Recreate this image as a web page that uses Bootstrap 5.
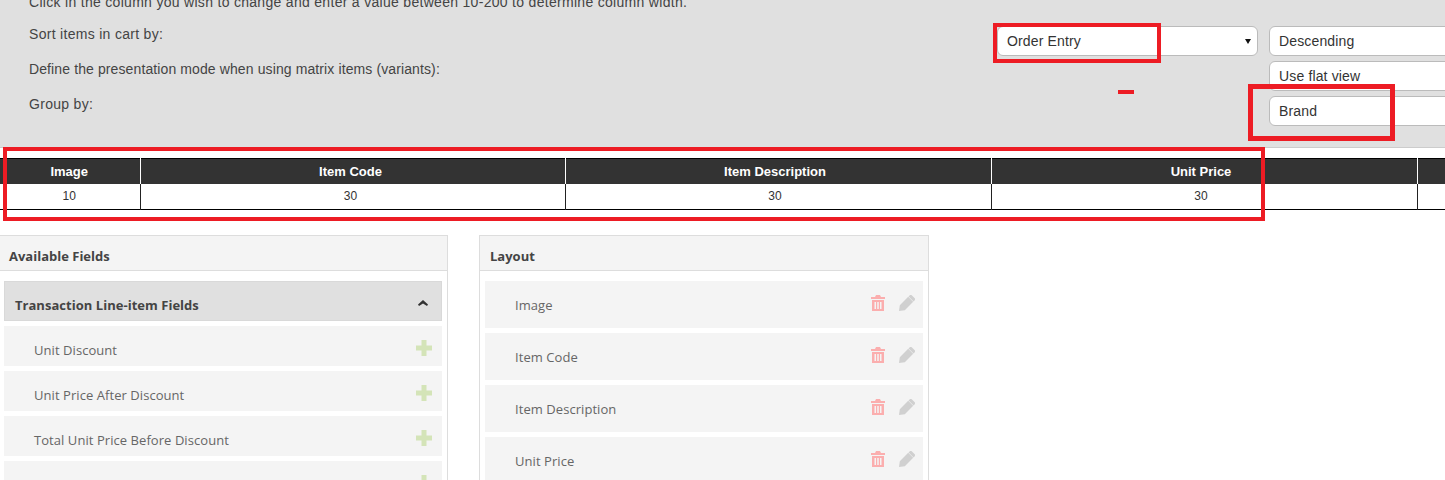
<!DOCTYPE html>
<html lang="en">
<head>
<meta charset="utf-8">
<title>Cart layout</title>
<link href="https://cdn.jsdelivr.net/npm/bootstrap@5.3.0/dist/css/bootstrap.min.css" rel="stylesheet">
<style>
html,body{height:480px;overflow:hidden;background:#fff}
body{position:relative;width:1445px;font-family:"Liberation Sans",Arial,sans-serif;color:#444}
.cfg{margin-top:-8px;height:156px;background:#e0e0e0;border-bottom:1px solid #ccc;padding-left:29px;font-size:14px;line-height:20px;color:#444;overflow:hidden;letter-spacing:.3px}
.cfg-intro{height:21px;margin-bottom:13px}
.cfg-row{height:30px;margin-bottom:5px}
.cfg-label{width:968px;flex:none;margin-top:-2px}
.cfg-label-tight{letter-spacing:.11px}
.pick{flex:none;width:261px;height:30px;padding:0 20px 0 9px;font-size:14px;line-height:28px;letter-spacing:.15px;color:#333;border:1px solid #bbb;border-radius:6px;box-shadow:none;background-color:#fff;background-position:right 6px center;background-size:6px 5px;background-image:url("data:image/svg+xml,%3Csvg xmlns='http://www.w3.org/2000/svg' viewBox='0 0 6 5'%3E%3Cpath d='M0 0h6L3 5z' fill='%23111'/%3E%3C/svg%3E")}
.pick-second{margin-left:11px}
.pick-offset{margin-left:272px}
.cols{table-layout:fixed;width:1700px;margin:10px 0 0 -1px;border-collapse:collapse;border-top:1px solid #000;border-bottom:1px solid #000;font-size:12px;text-align:center}
.cols th{height:25px;padding:0;background:#333;color:#fff;font-size:13px;font-weight:700;border-right:1px solid #fff;vertical-align:middle}
.cols td{height:26px;padding:0 0 1px;color:#333;background:#fff;border-right:1px solid #222;vertical-align:middle}
.cols th+th,.cols td+td{padding-right:6px}
.cols th:nth-child(2),.cols td:nth-child(2){padding-right:4px}
.boards{margin:25px 0 0 -1px;gap:31px;font-family:"Open Sans",sans-serif;font-size:13px;align-items:flex-start}
.board{border:1px solid #ddd;background:#fff;flex:none;border-bottom:0}
.board-a{width:449px}
.board-b{width:450px}
.board-head{height:35px;background:#f4f4f4;border-bottom:1px solid #ddd;font-weight:700;color:#444;line-height:40px;padding-left:9px}
.board-b .board-head{padding-left:10px}
.board-body{padding:10px 5px 0 4px;gap:5px}
.board-b .board-body{padding:10px 5px 0 5px}
.group-row{height:40px;background:#e0e0e0;border:1px solid #d9d9d9;font-weight:700;color:#444;padding:8px 13px 0 10px;line-height:1;letter-spacing:.03px}
.chev{margin-bottom:4px}
.field{height:40px;background:#f4f4f4;padding:0 10px 0 30px;color:#666;letter-spacing:.06px}
.field-label{margin-top:10px}
.field-add{margin-top:4px}
.field-tall{height:47px;padding-right:8px}
.field-tall .field-label{margin-top:2px}
.ico-set{gap:14px;margin-bottom:4px}
.mark-red{position:absolute;border:4px solid #ed1c24;pointer-events:none}
.m1{left:993px;top:23px;width:168px;height:40px}
.m2{left:1248px;top:84px;width:147px;height:57px;border-width:5px}
.m3{left:3px;top:147px;width:1262px;height:74px}
.m4{left:1118px;top:90px;width:16px;height:4px;background:#ed1c24;border:0}
</style>
</head>
<body>
<svg width="0" height="0" class="position-absolute" aria-hidden="true">
  <symbol id="i-plus" viewBox="0 0 16 16"><path d="M5.500 0h5v5.500H16v5h-5.500V16h-5v-5.500H0v-5h5.500z" fill="#d4e4b8"/></symbol>
  <symbol id="i-trash" viewBox="0 0 14 16"><path d="M5 0h4l1 2h4v2H0V2h4zM1 5h12v11H1zM3.500 7v7h1.500V7zM6.250 7v7h1.500V7zM9 7v7h1.500V7z" fill="#fbaeae" fill-rule="evenodd"/></symbol>
  <symbol id="i-pen" viewBox="0 0 16 16"><path d="M9.600 1.400 10.500.5a1.800 1.800 0 0 1 2.500 0l2.500 2.500a1.800 1.800 0 0 1 0 2.500l-.9.9zM9.200 1.800l5 5-8.400 8.400L0 16l.8-5.800z" fill="#d0d0d0"/></symbol>
</svg>
<div class="cfg">
  <div class="cfg-intro">Click in the column you wish to change and enter a value between 10-200 to determine column width.</div>
  <div class="cfg-row d-flex align-items-start">
    <div class="cfg-label">Sort items in cart by:</div>
    <select class="form-select pick"><option>Order Entry</option></select>
    <select class="form-select pick pick-second"><option>Descending</option></select>
  </div>
  <div class="cfg-row d-flex align-items-start">
    <div class="cfg-label cfg-label-tight">Define the presentation mode when using matrix items (variants):</div>
    <select class="form-select pick pick-offset"><option>Use flat view</option></select>
  </div>
  <div class="cfg-row d-flex align-items-start">
    <div class="cfg-label">Group by:</div>
    <select class="form-select pick pick-offset"><option>Brand</option></select>
  </div>
</div>

<table class="cols">
  <colgroup><col style="width:141px"><col style="width:425px"><col style="width:426px"><col style="width:426px"><col></colgroup>
  <thead><tr><th>Image</th><th>Item Code</th><th>Item Description</th><th>Unit Price</th><th></th></tr></thead>
  <tbody><tr><td>10</td><td>30</td><td>30</td><td>30</td><td></td></tr></tbody>
</table>

<div class="boards d-flex">
  <div class="board board-a">
    <div class="board-head">Available Fields</div>
    <div class="board-body d-flex flex-column">
      <div class="group-row d-flex align-items-center justify-content-between">
        <span>Transaction Line-item Fields</span>
        <svg class="chev" width="10" height="6" viewBox="0 0 10 6" aria-hidden="true"><path d="M5 0 10 4.500 9 6 5 3.500 1 6 0 4.500z" fill="#333"/></svg>
      </div>
      <div class="field d-flex align-items-center justify-content-between"><span class="field-label">Unit Discount</span><svg class="field-add" width="16" height="16" aria-hidden="true"><use href="#i-plus"/></svg></div>
      <div class="field d-flex align-items-center justify-content-between"><span class="field-label">Unit Price After Discount</span><svg class="field-add" width="16" height="16" aria-hidden="true"><use href="#i-plus"/></svg></div>
      <div class="field d-flex align-items-center justify-content-between"><span class="field-label">Total Unit Price Before Discount</span><svg class="field-add" width="16" height="16" aria-hidden="true"><use href="#i-plus"/></svg></div>
      <div class="field d-flex align-items-center justify-content-end"><svg class="field-add" width="16" height="16" aria-hidden="true"><use href="#i-plus"/></svg></div>
    </div>
  </div>
  <div class="board board-b">
    <div class="board-head">Layout</div>
    <div class="board-body d-flex flex-column">
      <div class="field field-tall d-flex align-items-center justify-content-between"><span class="field-label">Image</span><span class="ico-set d-flex"><svg width="14" height="16" aria-hidden="true"><use href="#i-trash"/></svg><svg width="16" height="16" aria-hidden="true"><use href="#i-pen"/></svg></span></div>
      <div class="field field-tall d-flex align-items-center justify-content-between"><span class="field-label">Item Code</span><span class="ico-set d-flex"><svg width="14" height="16" aria-hidden="true"><use href="#i-trash"/></svg><svg width="16" height="16" aria-hidden="true"><use href="#i-pen"/></svg></span></div>
      <div class="field field-tall d-flex align-items-center justify-content-between"><span class="field-label">Item Description</span><span class="ico-set d-flex"><svg width="14" height="16" aria-hidden="true"><use href="#i-trash"/></svg><svg width="16" height="16" aria-hidden="true"><use href="#i-pen"/></svg></span></div>
      <div class="field field-tall d-flex align-items-center justify-content-between"><span class="field-label">Unit Price</span><span class="ico-set d-flex"><svg width="14" height="16" aria-hidden="true"><use href="#i-trash"/></svg><svg width="16" height="16" aria-hidden="true"><use href="#i-pen"/></svg></span></div>
    </div>
  </div>
</div>

<div class="mark-red m1"></div>
<div class="mark-red m2"></div>
<div class="mark-red m3"></div>
<div class="mark-red m4"></div>
</body>
</html>
